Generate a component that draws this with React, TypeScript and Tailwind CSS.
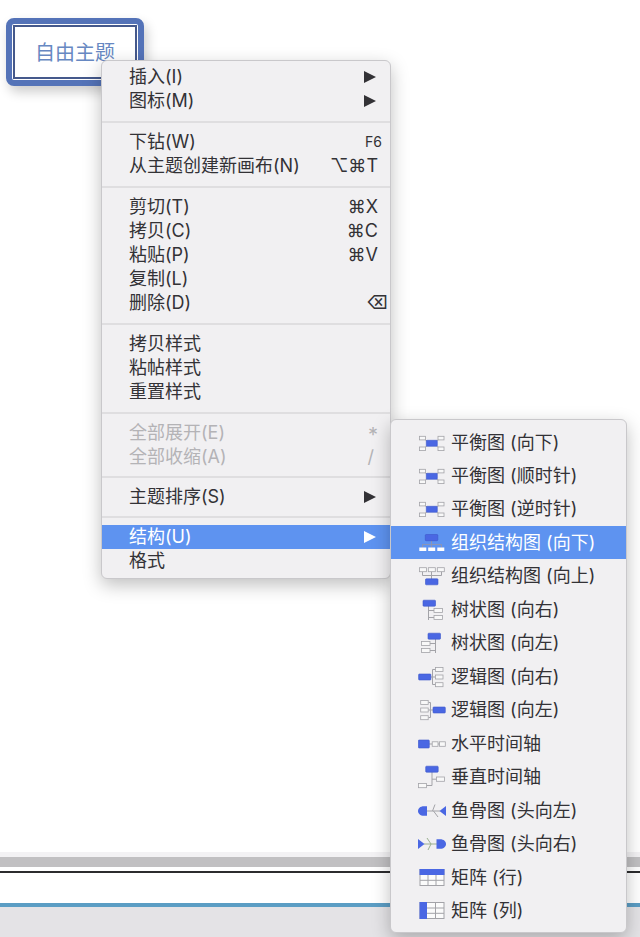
import React from "react";
import clsx from "clsx";

/** Types & const */
type Item={label:string;keys?:string;keysClass?:string;sub?:boolean;active?:boolean;disabled?:boolean};
type Group={items:ReadonlyArray<Item>;tight?:boolean};
type Shape={label:string;icon:React.ReactNode;active?:boolean};
const BLUE="#4a67e3", LINE="#a3a3a8";

const MENU:ReadonlyArray<Group>=[
  {items:[{label:"插入(I)",sub:true},{label:"图标(M)",sub:true}]},
  {items:[{label:"下钻(W)",keys:"F6",keysClass:"pr-2 text-sm"},{label:"从主题创建新画布(N)",keys:"⌥⌘T",keysClass:"pr-3"}]},
  {items:[
    {label:"剪切(T)",keys:"⌘X",keysClass:"pr-3"},
    {label:"拷贝(C)",keys:"⌘C",keysClass:"pr-3"},
    {label:"粘贴(P)",keys:"⌘V",keysClass:"pr-3"},
    {label:"复制(L)"},
    {label:"删除(D)",keys:"⌫",keysClass:"pr-[2px]"},
  ]},
  {items:[{label:"拷贝样式"},{label:"粘帖样式"},{label:"重置样式"}]},
  {items:[{label:"全部展开(E)",keys:"*",keysClass:"pr-3 pt-1 text-xl",disabled:true},{label:"全部收缩(A)",keys:"/",keysClass:"pr-4",disabled:true}]},
  {tight:true,items:[{label:"主题排序(S)",sub:true}]},
  {tight:true,items:[{label:"结构(U)",sub:true,active:true},{label:"格式"}]},
];

/** Icon parts */
const Solid=({x,y,w,h}:{x:number;y:number;w:number;h:number})=><rect x={x} y={y} width={w} height={h} rx="0.8" fill={BLUE} stroke="#3d57c9" strokeWidth="0.6"/>;
const Box=({x,y,w,h}:{x:number;y:number;w:number;h:number})=><rect x={x} y={y} width={w} height={h} fill="#f8f8f8" stroke={LINE} strokeWidth="0.8"/>;
const Wire=({d}:{d:string})=><path d={d} fill="none" stroke={LINE} strokeWidth="1"/>;

const balance=<>
  <Wire d="M6 8L9 10M6 17L9 15M21.5 8L18.5 10M21.5 17L18.5 15"/>
  <Box x={1.5} y={5.3} w={6} h={3.6}/><Box x={1.5} y={16} w={6} h={3.6}/>
  <Box x={20} y={5.3} w={6} h={3.6}/><Box x={20} y={16} w={6} h={3.6}/>
  <Solid x={8.3} y={9.3} w={11} h={6}/>
</>;
const orgDown=<>
  <path d="M13.500 9.500V17M4.500 17V13.500H23.500V17" fill="none" stroke="#8b95b5" strokeWidth="1"/>
  <Solid x={7.3} y={3.5} w={12.5} h={6.2}/>
  <path d="M1.300 16.500h7v3.500h-7zM10.200 16.500h7v3.500h-7zM19.300 16.500h7v3.500h-7z" fill="#fff"/>
</>;
const orgUp=<>
  <Wire d="M13.5 15V7.500M4.500 7.500V11.500H23.500V7.500"/>
  <Box x={1.5} y={3.7} w={7} h={4}/><Box x={10.3} y={3.7} w={7} h={4}/><Box x={19.3} y={3.7} w={7} h={4}/>
  <Solid x={7.5} y={14.8} w={12.5} h={6}/>
</>;
const treeRight=<>
  <Wire d="M10.500 8V22M10.500 19.500H16M10.500 12.500H16"/>
  <Box x={16} y={10.5} w={8.5} h={4}/><Box x={16} y={17.4} w={8.5} h={4}/>
  <Solid x={5} y={2.2} w={12.5} h={6}/>
</>;
const treeLeft=<>
  <Wire d="M17.500 8V22M17.500 19.500H12M17.500 12.500H12"/>
  <Box x={3.5} y={10.5} w={8.5} h={4}/><Box x={3.5} y={17.4} w={8.5} h={4}/>
  <Solid x={10} y={2.2} w={12.5} h={6}/>
</>;
const logicRight=<>
  <Wire d="M13 12H17.500M17.500 4.500H14.500V19.500H17.500"/>
  <Box x={17.5} y={2.5} w={7.5} h={4}/><Box x={17.5} y={10} w={7.5} h={4}/><Box x={17.5} y={17.7} w={7.5} h={4}/>
  <Solid x={0.6} y={9} w={12.3} h={6}/>
</>;
const logicLeft=<>
  <Wire d="M15 12H10.500M10.500 4.500H12.500V19.500H10.500"/>
  <Box x={2.7} y={2.5} w={7.5} h={4}/><Box x={2.7} y={10} w={7.5} h={4}/><Box x={2.7} y={17.7} w={7.5} h={4}/>
  <Solid x={15} y={9} w={12.3} h={6}/>
</>;
const timeH=<>
  <Wire d="M11 12H22"/>
  <Box x={14.2} y={9.8} w={5.8} h={4.5}/><Box x={21.5} y={9.8} w={5.8} h={4.5}/>
  <Solid x={0.3} y={8} w={11} h={8}/>
</>;
const timeV=<>
  <Wire d="M14 7V20.500H8.500M14 14.200H18.500"/>
  <Box x={18.5} y={12} w={8} h={4.3}/><Box x={0.5} y={18.4} w={8} h={4.3}/>
  <Solid x={7.7} y={1.2} w={12.5} h={6}/>
</>;
const fishLeft=<>
  <Wire d="M8 12H22M17 5.500L14.500 12M15.500 12L20 18"/>
  <path d="M9 7.200V16.800H6C2 16.800 0 14.500 0 12S2 7.200 6 7.200zM21.500 12L28 7V17z" fill={BLUE}/>
</>;
const fishRight=<>
  <path d="M6 12H20M9 6L13 12L10 18" fill="none" stroke="#9bb08f" strokeWidth="1"/>
  <path d="M18.500 7.200V16.800H22C26 16.800 28 14.500 28 12S26 7.200 22 7.200zM6.500 12L0 7V17z" fill={BLUE}/>
</>;
const matrixRow=<>
  <rect x="2" y="3.500" width="24" height="16" fill="#fbfbfb" stroke={LINE}/>
  <Wire d="M10 9V19.500M18 9V19.500M2 14.300H26"/>
  <path d="M1.500 3h25v6h-25z" fill={BLUE}/>
</>;
const matrixCol=<>
  <rect x="2" y="3.500" width="24" height="16" fill="#fbfbfb" stroke={LINE}/>
  <Wire d="M9 9H26M9 14.300H26M17.500 3.500V19.500"/>
  <path d="M1.500 3h7.500v17h-7.500z" fill={BLUE}/>
</>;

const SHAPES:ReadonlyArray<ReadonlyArray<Shape>>=[
  [{label:"平衡图 (向下)",icon:balance},{label:"平衡图 (顺时针)",icon:balance},{label:"平衡图 (逆时针)",icon:balance}],
  [{label:"组织结构图 (向下)",icon:orgDown,active:true},{label:"组织结构图 (向上)",icon:orgUp}],
  [{label:"树状图 (向右)",icon:treeRight},{label:"树状图 (向左)",icon:treeLeft}],
  [{label:"逻辑图 (向右)",icon:logicRight},{label:"逻辑图 (向左)",icon:logicLeft}],
  [{label:"水平时间轴",icon:timeH},{label:"垂直时间轴",icon:timeV}],
  [{label:"鱼骨图 (头向左)",icon:fishLeft},{label:"鱼骨图 (头向右)",icon:fishRight}],
  [{label:"矩阵 (行)",icon:matrixRow},{label:"矩阵 (列)",icon:matrixCol}],
];

/** Context menu */
const MenuRow=({item}:{item:Item})=>
  <button type="button" role="menuitem" disabled={item.disabled} aria-haspopup={item.sub?"menu":undefined}
    className={clsx("flex h-6 w-full items-center justify-between pl-[27px] text-left whitespace-nowrap",item.active&&"bg-[#5e93f0] text-white",item.disabled&&"text-[#b4b3b6]")}>
    <span>{item.label}</span>
    {item.keys&&<span className={item.keysClass}>{item.keys}</span>}
    {item.sub&&<svg viewBox="0 0 12 12" className="mr-[14px] size-3" fill="currentColor" aria-hidden="true"><path d="M0 0L12 6L0 12z"/></svg>}
  </button>;

const ContextMenu=()=>
  <div role="menu" aria-label="主题" className="absolute top-[60px] left-[101px] w-[290px] rounded-md border border-[#c9c8cb] bg-[#f1f0f2] pt-1 pb-[5px] shadow-[0_6px_18px_rgba(0,0,0,0.25)]">
    {MENU.map((g,i)=><React.Fragment key={i}>
      {i>0&&<div role="separator" className={clsx("h-[2px] bg-[#dfdee0]",g.tight?"my-[7px]":"mt-2 mb-[7px]")}/>}
      {g.items.map(it=><MenuRow key={it.label} item={it}/>)}
    </React.Fragment>)}
  </div>;

/** Structure submenu */
const StructureMenu=()=>
  <div role="menu" aria-label="结构" className="absolute top-[419px] left-[390px] flex w-[237px] flex-col gap-px rounded-md border border-[#c9c8cb] bg-[#f1f0f2] pt-[6px] pb-[5px] shadow-[0_6px_18px_rgba(0,0,0,0.25)]">
    {SHAPES.map((g,i)=><div key={i} role="group">
      {g.map(s=><button key={s.label} type="button" role="menuitem"
        className={clsx("flex h-[33px] w-full items-center gap-[5px] pl-[27px] text-left whitespace-nowrap",s.active&&"bg-[#5e93f0] text-white")}>
        <svg viewBox="0 0 28 24" className="h-6 w-7 shrink-0" aria-hidden="true">{s.icon}</svg>
        <span>{s.label}</span>
      </button>)}
    </div>)}
  </div>;

export default function App(){
  return <div className="relative flex min-h-screen flex-col overflow-hidden bg-white font-['Inter','Noto_Sans_CJK_SC',sans-serif] text-lg leading-6 text-[#333236]">
    <main className="flex-1">
      <button type="button" className="absolute top-[18px] left-[6px] rounded-lg border-[6px] border-[#5473b8] bg-white p-px shadow-[3px_6px_12px_rgba(0,0,0,0.2)]">
        <span className="block border-2 border-[#45598c] px-5 pt-[14px] pb-3 text-xl leading-6 text-[#6788c2]">自由主题</span>
      </button>
    </main>
    <footer>
      <div className="h-[15px] border-t-[5px] border-[#f3f2f4] bg-[#c1c0c2]"/>
      <div className="mt-1 h-8 border-t-2 border-[#2c2c2e]"/>
      <div className="h-[34px] border-t-4 border-[#5b9dc4] bg-[#e4e3e6]"/>
    </footer>
    <ContextMenu/>
    <StructureMenu/>
  </div>;
}
